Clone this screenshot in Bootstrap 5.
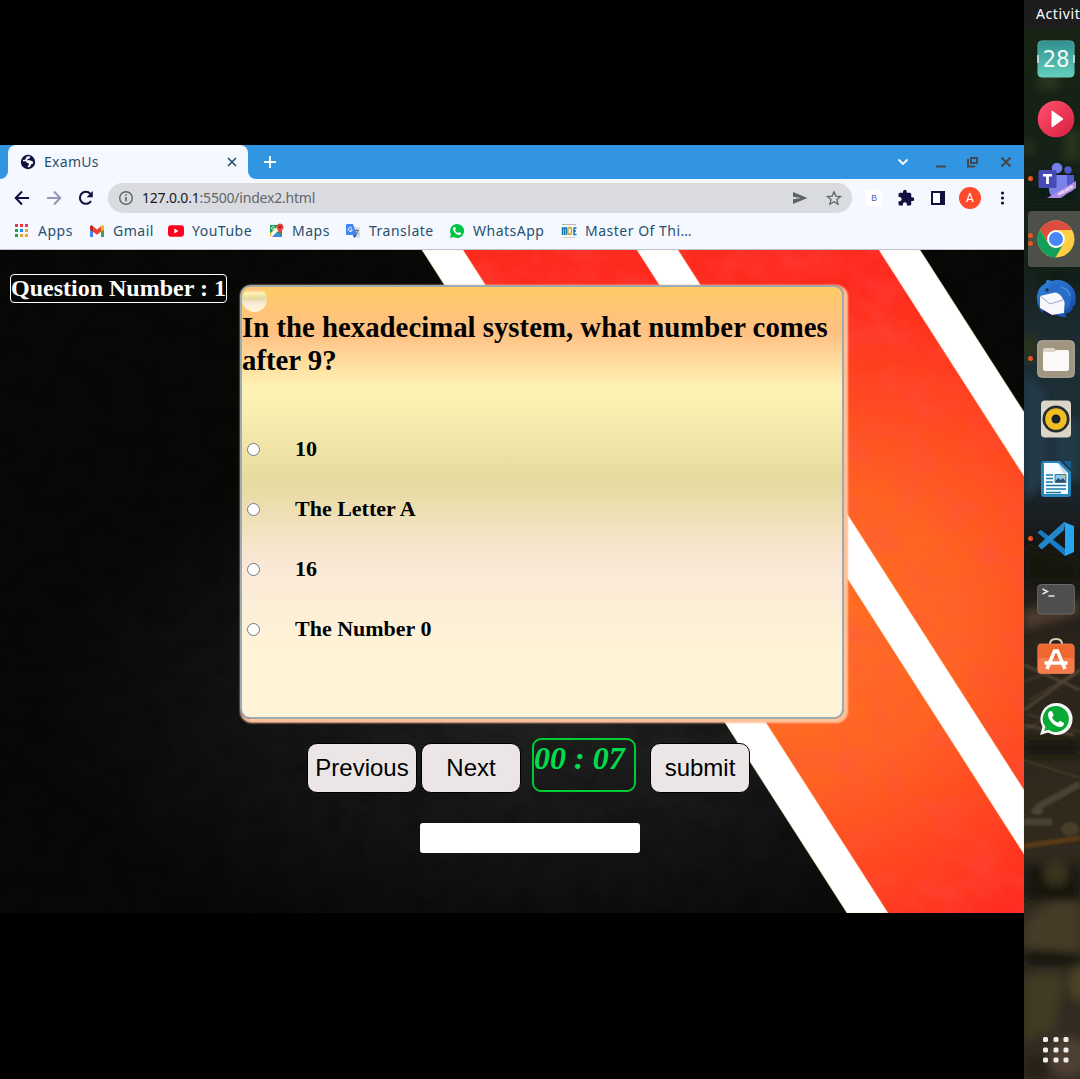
<!DOCTYPE html>
<html lang="en">
<head>
<meta charset="utf-8">
<meta name="viewport" content="width=device-width, initial-scale=1">
<title>ExamUs</title>
<link href="https://cdn.jsdelivr.net/npm/bootstrap@5.3.0/dist/css/bootstrap.min.css" rel="stylesheet">
<style>
body{background:#000;height:1079px;overflow:hidden;font-family:"Noto Sans",sans-serif;font-size:14px;line-height:20px}
svg{display:block;flex:none}
.desk{width:1080px;height:1079px}
.screen{width:1024px;padding-top:145px}
.tabstrip{height:34px;background:#3195e2}
.tab-edge{width:8px;background:#f5f8fe}
.tab-edge i{display:block;height:34px;background:#3195e2}
.tab-edge.lft i{border-bottom-right-radius:8px}
.tab-edge.rgt i{border-bottom-left-radius:8px}
.tab-on{width:240px;background:#f5f8fe;border-radius:8px 8px 0 0;padding:0 10px 0 12px;color:#28506f;letter-spacing:.3px}
.toolbar{height:38px;background:#f5f8fe;padding-left:12px}
.omni{width:744px;height:30px;border-radius:15px;background:#dadbe0;padding:0 8px 0 9px;color:#63666b;margin-left:12px}
.omni b{font-weight:400;color:#17191c}
.url{letter-spacing:-.2px;margin-left:7px}
.ext-b{width:16px;height:16px;background:#fff;color:#5653b5;font:8.5px/16px "Liberation Sans",sans-serif}
.avatar{width:22px;height:22px;background:#ff4a2b;color:#fff;font:12px/22px Roboto,sans-serif}
.marks{height:33px;background:#f5f8fe;border-bottom:1px solid #bcc1d3;color:#28506f;padding:0 0 5px 14px;letter-spacing:.5px}
.marks div{display:flex;align-items:center;gap:8px;white-space:nowrap;flex:none}
.exam{height:663px;position:relative;overflow:hidden;font-family:"Liberation Serif",serif;color:#000}
.exam-bg{position:absolute;inset:0}
.exam-body{position:relative}
.q-no{margin:24px 13px 0 10px;width:217px;height:29px;border:1px solid #fff;border-radius:4px;color:#fff;font-weight:700;font-size:24px;line-height:27px}
.quiz{margin-top:35px;width:604px;height:434px;border:2px solid #9cabb0;border-radius:10px;box-shadow:2px 2px 2px 2px #ffc199}
.quiz,.orb{background:linear-gradient(#ffcb67 0%,#ffc083 10.5%,#fff3b5 23.5%,#e7daa0 45.5%,#fae8d6 64.5%,#fff3d7 83%,#fff3d7 100%)}
.orb{width:25px;height:25px;border-radius:50%}
.quiz h2{font-size:28.8px;line-height:33px;font-weight:700;margin:-1px 0 42px}
.opt{height:60px;font-size:22px;line-height:26px;font-weight:700;padding-left:5px;gap:35px}
.opt input{margin:0;width:13px;height:13px}
.controls{margin:19px 0 0 307px}
.btn.ctl{height:50px;width:100px;margin-top:5px;padding:0;border:1px solid #000;border-radius:10px;background:#ebe5e5;color:#000;font:24px/48px "Liberation Sans",sans-serif}
.btn.ctl.wide{width:110px;margin-right:4px}
.clock{width:104px;height:54px;margin:0 14px 0 11px;border:2px solid #0c3;border-radius:9px;color:#00dc4b;font-weight:700;font-style:italic;font-size:32px;line-height:37px}
.result{width:220px;height:30px;margin:30px 0 0 420px;background:#fff;border-radius:3px}
.launcher{width:56px;position:relative;overflow:hidden}
.launcher-bg{position:absolute;inset:0}
.topbar{position:relative;height:28px;background:#1d1d1d;color:#fff;padding:4px 0 0 12px;letter-spacing:.6px;white-space:nowrap}
.dock{position:relative;width:64px;padding-top:1px;height:1051px}
.slot{height:60px;position:relative}
.slot.on::before{content:"";position:absolute;inset:2px 0 2px 4px;background:#4d4f49;border-radius:4px}
.slot svg{position:relative}
.pip{position:absolute;left:4px;top:27px;width:5px;height:5px;border-radius:50%;background:#e95420}
.pip.hi{top:24px}.pip.lo{top:31px}
</style>
</head>
<body>
<div class="desk d-flex">
<div class="screen">
  <div class="tabstrip d-flex align-items-center">
    <div class="tab-edge lft"><i></i></div>
    <div class="tab-on d-flex align-items-center h-100">
      <svg width="16" height="16" viewBox="0 0 16 16"><circle cx="8" cy="8" r="7.2" fill="#11103f"/><path d="M7 2.300 10.500 2.600 9.600 4.400 7.600 4.900 7.300 6.300h3l2 1.200 1 .3-.5 2-1.600.5-.9 2.300-2.200.9-.6-1 1.500-1.700-.2-1.400-2.300-1-.6-1.200H2.900V6.100L5 5.800z" fill="#f5f8fe"/></svg>
      <span class="ms-2">ExamUs</span>
      <svg class="ms-auto" width="12" height="12" viewBox="0 0 12 12"><path d="m2 2 8 8M10 2l-8 8" stroke="#28506f" stroke-width="1.7"/></svg>
    </div>
    <div class="tab-edge rgt"><i></i></div>
    <svg class="ms-2" width="12" height="12" viewBox="0 0 12 12"><path d="M6 0v12M0 6h12" stroke="#fff" stroke-width="1.8"/></svg>
    <svg class="ms-auto me-4" width="12" height="8" viewBox="0 0 12 8"><path d="m1.500 1.500 4.500 4.500 4.500-4.500" fill="none" stroke="#fff" stroke-width="1.800"/></svg>
    <svg style="margin:0 20px 0 2px" width="12" height="14" viewBox="0 0 12 14"><path d="M1 11.500h10" stroke="#44494f" stroke-width="2"/></svg>
    <svg width="12" height="12" viewBox="0 0 12 12" fill="none" stroke="#44494f" stroke-width="2"><path d="M4 2h6v5H4zM1 3v7.500h7"/></svg>
    <svg style="margin:0 12px 0 21px" width="12" height="12" viewBox="0 0 12 12"><path d="m1.500 1.500 9 9m0-9-9 9" stroke="#44494f" stroke-width="2.200"/></svg>
  </div>
  <div class="toolbar d-flex align-items-center">
    <svg width="20" height="20" viewBox="0 0 20 20" fill="none" stroke="#11103f" stroke-width="2"><path d="M17 10H4M10 3.500 3.700 10l6.300 6.500"/></svg>
    <svg style="margin-left:12px" width="20" height="20" viewBox="0 0 20 20" fill="none" stroke="#9797b5" stroke-width="2"><path d="M3 10h13M10 3.500l6.300 6.500-6.300 6.500"/></svg>
    <svg style="margin-left:12px" width="20" height="20" viewBox="0 0 20 20"><path d="M15 13a6 6 0 1 1-.7-7.300" fill="none" stroke="#11103f" stroke-width="2.100"/><path d="M16.800 3v6.200h-6.200z" fill="#11103f"/></svg>
    <div class="omni d-flex align-items-center">
      <svg width="18" height="18" viewBox="0 0 18 18" fill="none" stroke="#5f6368"><circle cx="9" cy="9" r="6.300" stroke-width="1.400"/><path d="M9 8v4.300M9 5.200v1.600" stroke-width="1.600"/></svg>
      <span class="url"><b>127.0.0.1</b>:5500/index2.html</span>
      <svg class="ms-auto" width="16" height="14" viewBox="0 0 16 14"><path d="M1 1l14.500 6L1 13V8.300L9 7 1 5.700z" fill="#5f6368"/></svg>
      <svg style="margin-left:16px" width="20" height="18" viewBox="0 0 20 18"><path d="m10 2.800 1.800 4.300 4.700.4-3.600 3.100 1.100 4.600L10 12.800l-4.100 2.400L7 10.600 3.400 7.500l4.700-.4z" fill="none" stroke="#5f6368" stroke-width="1.300"/></svg>
    </div>
    <div class="ext-b text-center" style="margin-left:14px">B</div>
    <svg style="margin-left:15px" width="18" height="18" viewBox="0 0 24 24"><path d="M20.500 11H19V7a2 2 0 0 0-2-2h-4V3.500a2.500 2.500 0 0 0-5 0V5H4a2 2 0 0 0-2 2v3.800h1.500a2.700 2.700 0 0 1 0 5.400H2V20a2 2 0 0 0 2 2h3.800v-1.500a2.700 2.700 0 0 1 5.400 0V22H17a2 2 0 0 0 2-2v-4h1.500a2.500 2.500 0 0 0 0-5z" fill="#11103f"/></svg>
    <svg style="margin-left:16px" width="14" height="14" viewBox="0 0 14 14"><path d="M1 1h12v12H1z" fill="#fff" stroke="#11103f" stroke-width="2"/><path d="M9 1h4v12H9z" fill="#11103f"/></svg>
    <div class="avatar rounded-circle text-center" style="margin-left:14px">A</div>
    <svg style="margin-left:19px" width="5" height="14" viewBox="0 0 5 14" fill="#11103f"><circle cx="2.500" cy="2" r="1.600"/><circle cx="2.500" cy="7" r="1.600"/><circle cx="2.500" cy="12" r="1.600"/></svg>
  </div>
  <div class="marks d-flex align-items-center">
    <div style="width:75px;gap:9px"><svg width="15" height="14" viewBox="0 0 15 14"><path d="M1 0h3v3H1zM6 0h3v3H6zM11 0h3v3h-3z" fill="#ee3345"/><path d="M1 5h3v3H1z" fill="#15a45c"/><path d="M6 5h3v3H6z" fill="#1a8cf0"/><path d="M11 5h3v3h-3z" fill="#f3a12c"/><path d="M1 10h3v3H1z" fill="#15a45c"/><path d="M6 10h3v3H6zM11 10h3v3h-3z" fill="#f3a12c"/></svg>Apps</div>
    <div style="width:79px"><svg width="16" height="12" viewBox="0 0 16 12"><path d="M1 2v10h3V5z" fill="#4285f4"/><path d="M15 2v10h-3V5z" fill="#34a853"/><path d="M1 1.500v3l7 5.300 7-5.300v-3L13 .500 8 4.500 3 .500z" fill="#ea4335"/><path d="M12 1.200v5.500l3-2.300V2C15 .300 13.200 0 12 1.200z" fill="#fbbc04"/><path d="M1 2v2.500l3 2.200V1.200C2.800 0 1 .300 1 2z" fill="#c5221f"/></svg>Gmail</div>
    <div style="width:100px"><svg width="16" height="12" viewBox="0 0 16 12"><rect y=".3" width="16" height="11.400" rx="3" fill="#ff001f"/><path d="M6.300 3.500v5l4.200-2.500z" fill="#fff"/></svg>YouTube</div>
    <div style="width:77px"><svg width="16" height="16" viewBox="0 0 16 16"><path d="M2 2h10l2 3v9H2z" fill="#f7d454"/><path d="M2 2h8L2 11z" fill="#16a05d"/><path d="m4 14 5-5 5 5z" fill="#4285f4"/><path d="M1 12.500 11 2.500 13 4.500 3 14.500z" fill="#fff"/><path d="M2 14V9l2 2.500z" fill="#f5c32c"/><path d="m8.500 9 5.500 5V8z" fill="#16a05d"/><path d="M6.300 4.300A1.500 1.500 0 1 0 6.500 5.500H5.200" fill="none" stroke="#fff" stroke-width=".8"/><path d="M12 .500a3.500 3.500 0 0 1 3.300 4.800L12 11 8.700 5.300A3.500 3.500 0 0 1 12 .500z" fill="#e5443b"/><circle cx="12" cy="4" r="1.300" fill="#8d211e"/></svg>Maps</div>
    <div style="width:104px"><svg width="16" height="16" viewBox="0 0 16 16"><path d="M7 4h8v11H9z" fill="#dedede"/><path d="M2 1h6l4 11H2a1 1 0 0 1-1-1V2a1 1 0 0 1 1-1z" fill="#4285f4"/><path d="m8 12h4l-3 3z" fill="#2050c8"/><path d="M10 7.500h4M12 6v1.500m1.200 0-3 4M10.800 8.500l3 3" stroke="#6d7785" fill="none"/><path d="M7 5.300A2 2 0 1 0 7.300 7H5.400" fill="none" stroke="#fff"/></svg>Translate</div>
    <div style="width:112px"><svg width="16" height="16" viewBox="0 0 32 32"><path d="M16 2a14 14 0 0 0-12 21L2 30l7-2A14 14 0 1 0 16 2z" fill="#00c346"/><path d="M11 8c-2 0-3 2-3 4 0 5 7 12 12 12 3 0 5-2 4-4l-4-2-2 2c-3-1-5-3-6-6l2-2-2-4z" fill="#fff"/></svg>WhatsApp</div>
    <div><svg width="16" height="16" viewBox="0 0 16 16"><path d="M1 1.500h14" stroke="#bfb5a8"/><path d="M1.500 12V5h4v7M3.500 5v7" fill="none" stroke="#1478ad" stroke-width="1.500"/><ellipse cx="8.700" cy="8" rx="1.900" ry="3.500" fill="none" stroke="#d0a335" stroke-width="1.500"/><path d="M15.500 5H13v6.500h2.500M12.500 8H15" fill="none" stroke="#1478ad" stroke-width="1.500"/><path d="M2 14.500h12" stroke="#dcd2c4"/></svg>Master Of Thi…</div>
  </div>
  <main class="exam">
    <svg class="exam-bg" width="1024" height="663" viewBox="0 0 1024 663">
      <defs>
        <radialGradient id="lava" gradientUnits="userSpaceOnUse" cx="0" cy="0" r="1" gradientTransform="translate(790 390) rotate(-20) scale(440 350)"><stop offset="0" stop-color="#ff7223"/><stop offset=".4" stop-color="#ff6421"/><stop offset=".98" stop-color="#ff2a1e"/></radialGradient>
        <radialGradient id="coal" gradientUnits="userSpaceOnUse" cx="0" cy="0" r="1" gradientTransform="translate(580 450) scale(540 270)"><stop offset="0" stop-color="#222323"/><stop offset="1" stop-color="#080807"/></radialGradient>
        <filter id="grain" x="0" y="0" width="1" height="1"><feTurbulence type="fractalNoise" baseFrequency=".035 .045" numOctaves="5" seed="8"/><feColorMatrix values="0 0 0 0 0  0 0 0 0 0  0 0 0 0 0  1.400 0 0 0 -.600"/></filter>
        <filter id="scorch" x="0" y="0" width="1" height="1"><feTurbulence type="fractalNoise" baseFrequency=".03 .04" numOctaves="5" seed="3"/><feColorMatrix values="0 0 0 0 1  0 0 0 0 .08  0 0 0 0 .08  1.600 0 0 0 -.600" result="n"/><feComposite in="n" in2="SourceGraphic" operator="in"/></filter>
      </defs>
      <path d="M0 0h1024v663H0z" fill="url(#coal)"/>
      <path d="M0 0h1024v663H0z" filter="url(#grain)" opacity=".35"/>
      <path d="M442 0h458l124 194v469H867z" fill="url(#lava)"/>
      <path d="M442 0h458l124 194v469H867z" filter="url(#scorch)" opacity=".45"/>
      <path d="M422 0h41l425 663h-41zM637 0h41l346 540v64zM879 0h41l104 162v64z" fill="#fff" stroke="#ffd9a0" stroke-width=".5"/>
    </svg>
    <div class="exam-body">
      <div class="d-flex">
        <div class="q-no text-nowrap">Question Number : 1</div>
        <section class="quiz">
          <div class="orb"></div>
          <h2>In the hexadecimal system, what number comes after 9?</h2>
          <label class="opt d-flex align-items-center"><input type="radio" name="answer">10</label>
          <label class="opt d-flex align-items-center"><input type="radio" name="answer">The Letter A</label>
          <label class="opt d-flex align-items-center"><input type="radio" name="answer">16</label>
          <label class="opt d-flex align-items-center"><input type="radio" name="answer">The Number 0</label>
        </section>
      </div>
      <div class="controls d-flex">
        <button class="btn ctl wide">Previous</button>
        <button class="btn ctl">Next</button>
        <div class="clock text-nowrap">00 : 07</div>
        <button class="btn ctl">submit</button>
      </div>
      <div class="result"></div>
    </div>
  </main>
</div>
<aside class="launcher">
  <svg class="launcher-bg" width="56" height="1079" viewBox="0 0 56 1079">
    <defs>
      <linearGradient id="wall" x2="0" y2="1"><stop offset="0" stop-color="#172312"/><stop offset=".25" stop-color="#15201a"/><stop offset=".33" stop-color="#1e2f38"/><stop offset=".44" stop-color="#1c2930"/><stop offset=".5" stop-color="#171818"/><stop offset=".6" stop-color="#2b241b"/><stop offset=".75" stop-color="#30291c"/><stop offset="1" stop-color="#342c24"/></linearGradient>
      <filter id="soft" filterUnits="userSpaceOnUse" x="-20" y="0" width="96" height="1079"><feGaussianBlur stdDeviation="4"/></filter>
      <filter id="soft1" filterUnits="userSpaceOnUse" x="-20" y="0" width="96" height="1079"><feGaussianBlur stdDeviation=".9"/></filter>
    </defs>
    <path d="M0 0h56v1079H0z" fill="url(#wall)"/>
    <g filter="url(#soft)">
      <path d="M15 70h20v20H15zM40 130h16v30H40zM0 140h8v14H0z" fill="#25351a"/>
      <path d="M0 335h12v25H0zM30 345h18v20H30z" fill="#2c3514"/>
      <path d="M0 180h56v25H0zM20 270h30v20H20z" fill="#101d12"/>
      <path d="M0 375 20 390 25 480 0 500zM30 420h26v60H30z" fill="#243b4a"/>
      <path d="M0 545 56 560v25H0zM0 740h56v15H0z" fill="#141310"/>
      <path d="M0 610 56 600v14L0 630z" fill="#4b3b2a"/>
      <path d="M0 865h56v35H0zM0 950h56v15H0z" fill="#171511"/>
      <ellipse cx="32" cy="874" rx="13" ry="12" fill="#38301d"/>
      <path d="M0 925Q25 893 56 905v48L0 948z" fill="#443b26"/>
      <path d="M0 980Q28 965 40 980l-10 50-30 10z" fill="#403a22"/>
      <ellipse cx="55" cy="984" rx="10" ry="17" fill="#4c4424"/>
      <ellipse cx="44" cy="1057" rx="19" ry="20" fill="#4d4030"/>
      <path d="M0 1055h23v24H0z" fill="#282419"/>
    </g>
    <g filter="url(#soft1)">
      <path d="M0 665 56 690M0 710 56 670M0 725l50 10" stroke="#4d4230" stroke-width="3"/>
      <path d="m0 682 38-15M5 700l51-30M0 730l43-24M13 643l37 33M4 714l52 18M0 760l56 18" stroke="#75664b" opacity=".6"/>
      <path d="M0 822h28M12 808 56 784" stroke="#484233" stroke-width="7"/>
      <path d="M0 846 56 838" stroke="#5a3a14" stroke-width="5"/>
      <ellipse cx="46" cy="829" rx="9" ry="7" fill="#463e29"/>
      <ellipse cx="13" cy="811" rx="6" ry="4" fill="#4b4433"/>
    </g>
  </svg>
  <div class="topbar">Activit</div>
  <nav class="dock d-flex flex-column">
    <div class="slot d-flex align-items-center justify-content-center"><svg width="38" height="38" viewBox="0 0 38 38"><defs><linearGradient id="cal" x2="0" y2="1"><stop stop-color="#2f8f90"/><stop offset="1" stop-color="#62d0bd"/></linearGradient></defs><rect x=".8" y=".8" width="36.400" height="36.400" rx="4" fill="url(#cal)" stroke="#75b9ad" stroke-width=".6"/><path d="M1 15v8M37 15v8" stroke="#edf7f5" stroke-width="1.300"/><text x="5.500" y="27" font-family="DejaVu Sans Mono" font-size="22.500" textLength="27" fill="#eff8f5">28</text></svg></div>
    <div class="slot d-flex align-items-center justify-content-center"><svg width="38" height="38" viewBox="0 0 38 38"><defs><linearGradient id="vid" x1="0" y1="0" x2="1" y2="1"><stop stop-color="#ff536f"/><stop offset="1" stop-color="#d91d3f"/></linearGradient></defs><circle cx="19" cy="19" r="18.300" fill="url(#vid)"/><path d="M15 11v16l11-8z" fill="#fff" stroke="#fff" stroke-linejoin="round"/></svg></div>
    <div class="slot d-flex align-items-center justify-content-center"><i class="pip"></i><svg width="40" height="40" viewBox="0 0 40 40"><circle cx="21" cy="9" r="5.300" fill="#7480e7"/><circle cx="32" cy="11" r="3.700" fill="#5059c9"/><path d="M28 16h10v14q-3 5-10 3z" fill="#5059c9"/><path d="M14 16h17v16q-2 7-9 7-8 0-9-8z" fill="#7b83eb"/><rect x="2.500" y="11" width="18" height="18" rx="1.500" fill="#464bb5"/><path d="M7 15h9v2.500h-3.100V25h-2.800v-7.500H7z" fill="#fff"/><path d="m11 39 29-17v7L24 39z" fill="#b18be3"/><text transform="translate(23 37) rotate(-31)" font-family="Liberation Sans" font-size="4" font-weight="bold" textLength="17" fill="#fff">PREVIEW</text></svg></div>
    <div class="slot on d-flex align-items-center justify-content-center"><i class="pip hi"></i><i class="pip lo" style="top:32px"></i><svg width="38" height="38" viewBox="0 0 38 38"><circle cx="19" cy="19" r="18.500" fill="#ffce43"/><path d="M3 9.700A18.500 18.500 0 0 1 35 10H19a9 9 0 0 0-8 13z" fill="#dd4c40"/><path d="M3 9.700A18.500 18.500 0 0 0 18.500 37.500l8.300-14.200a9 9 0 0 1-15.700 0z" fill="#139f5b"/><circle cx="19" cy="19" r="8.800" fill="#fff"/><circle cx="19" cy="19" r="7" fill="#4587f3"/></svg></div>
    <div class="slot d-flex align-items-center justify-content-center"><svg width="40" height="40" viewBox="0 0 40 40"><defs><linearGradient id="bird" x1="0" y1="0" x2="1" y2="1"><stop stop-color="#3188dc"/><stop offset="1" stop-color="#1445a5"/></linearGradient></defs><path d="M16 2Q9-1 10 4 3 7 1 16q-1 11 6 18l1-6 8 9 1-3q7 5 14 4l-2-3q8-2 8-8l2-1Q42 13 34 6 26-1 16 2z" fill="url(#bird)"/><path d="m4 29 9 8 4-2-6-8z" fill="#21135c"/><path d="m4 17 21-5 4 8-1 14-12 2-12-7z" fill="#f8f8fc"/><path d="m4 17 10 8 13-4" fill="none" stroke="#9aa7c9"/><path d="M17 4q14-1 18 10 2 9-5 18 0-8-3-12-2-6-12-8-3-6 2-8z" fill="#276cc9"/><path d="M25 8q7 2 9 9" fill="none" stroke="#3f93de" stroke-width="1.500"/><circle cx="11" cy="11" r="1.800" fill="#17364c"/></svg></div>
    <div class="slot d-flex align-items-center justify-content-center"><i class="pip"></i><svg width="38" height="38" viewBox="0 0 38 38"><rect x=".7" y=".7" width="36.600" height="36.600" rx="4" fill="#9f9580" stroke="#b9af9b"/><path d="M6 10a2 2 0 0 1 2-2h9l2 2.500h11a2 2 0 0 1 2 2V16H6z" fill="#ddd6c8"/><path d="M6 14q0-2 2-2h9l3-2h10q2 0 2 2v17q0 2-2 2H8q-2 0-2-2z" fill="#faf9f7"/></svg></div>
    <div class="slot d-flex align-items-center justify-content-center"><svg width="38" height="38" viewBox="0 0 38 38"><rect x="4" y=".5" width="30" height="37" rx="4" fill="#dcd6c9"/><circle cx="19" cy="19" r="13.500" fill="#252d30"/><circle cx="19" cy="19" r="10.800" fill="#f0bd22"/><circle cx="19" cy="19" r="4.500" fill="#171f2b"/></svg></div>
    <div class="slot d-flex align-items-center justify-content-center"><svg width="38" height="38" viewBox="0 0 38 38"><path d="M7 1h16l11 11v22q0 3-3 3H7q-3 0-3-3V4q0-3 3-3z" fill="#2787ba"/><path d="M26 1h8v8z" fill="#16618f"/><path d="M7 3h14l10 10v21H7z" fill="#f5fbff"/><path d="M21 3l10 10h-5z" fill="#c9deea"/><path d="M9 15h7m-7 3.500h7m-7 3.500h7M9 25.500h20M9 29h20M9 32.500h15" stroke="#1b78aa" stroke-width="1.500"/><path d="M18 14.500h11v8H18z" fill="#8bc8ed" stroke="#235a7c" stroke-width=".8"/><path d="m18 22 3-4 3 2 2-2 3 4z" fill="#294d65"/><circle cx="27" cy="16.500" r="1.200" fill="#f0c333"/></svg></div>
    <div class="slot d-flex align-items-center justify-content-center"><i class="pip"></i><svg width="38" height="38" viewBox="0 0 38 38"><path d="m4 10 24 19v7L1 13q-1-1 3-3z" fill="#167cc5"/><path d="m3.500 28.500-2.500-3L27 2v8L6 28.500q-1 1-2.500 0z" fill="#2387cb"/><path d="M27 2l10 4v26l-9 4V11z" fill="#29a5ef"/></svg></div>
    <div class="slot d-flex align-items-center justify-content-center"><svg width="38" height="32" viewBox="0 0 38 32"><rect x=".7" y="1.500" width="36.600" height="29.500" rx="3.500" fill="#4d4e4d" stroke="#6b6c68"/><path d="m5.500 6 5 2.500-5 2.500M11.500 13h6" fill="none" stroke="#e5e5e2" stroke-width="1.400"/></svg></div>
    <div class="slot d-flex align-items-center justify-content-center pb-1"><svg width="38" height="40" viewBox="0 0 38 40"><path d="M13 8V7q0-5 6-5t6 5v1" fill="none" stroke="#e4ccb1" stroke-width="2"/><rect x=".8" y="7" width="36.400" height="29.500" rx="3.500" fill="#f16730" stroke="#f58b60" stroke-width=".7"/><path d="M1 21h36v12.500q0 2.500-3 2.500H4q-3 0-3-2.500z" fill="#f77b4a"/><path d="m10 32 7.500-18h3L28 32" fill="none" stroke="#fff" stroke-width="3.500"/><path d="M7.500 26h23" stroke="#fff" stroke-width="3.500"/></svg></div>
    <div class="slot d-flex align-items-center justify-content-center"><svg width="34" height="34" viewBox="0 0 34 34"><path d="M17 1A16 16 0 0 0 3.500 25L1 33l8-2.500A16 16 0 1 0 17 1z" fill="#f5f8f5"/><path d="M17 4A13 13 0 0 0 6.500 25L5 29l4.500-1.300A13 13 0 1 0 17 4z" fill="#08a934"/><path d="M12 9c-2 0-3 2-3 4 0 5 7 12 12 12 3 0 4-2 4-4l-4-2.200-2 2c-3-1-5-3-6-5.500l1.700-2L13 9.200z" fill="#fff"/></svg></div>
    <div class="mt-auto d-flex justify-content-center" style="padding-bottom:16px"><svg width="26" height="26" viewBox="0 0 26 26" fill="#f0eeeb"><rect width="5" height="5" rx="1.500"/><rect x="10.500" width="5" height="5" rx="1.500"/><rect x="20.500" width="5" height="5" rx="1.500"/><rect y="10.500" width="5" height="5" rx="1.500"/><rect x="10.500" y="10.500" width="5" height="5" rx="1.500"/><rect x="20.500" y="10.500" width="5" height="5" rx="1.500"/><rect y="20.500" width="5" height="5" rx="1.500"/><rect x="10.500" y="20.500" width="5" height="5" rx="1.500"/><rect x="20.500" y="20.500" width="5" height="5" rx="1.500"/></svg></div>
  </nav>
</aside>
</div>
<script src="https://cdn.jsdelivr.net/npm/bootstrap@5.3.0/dist/js/bootstrap.bundle.min.js"></script>
</body>
</html>
